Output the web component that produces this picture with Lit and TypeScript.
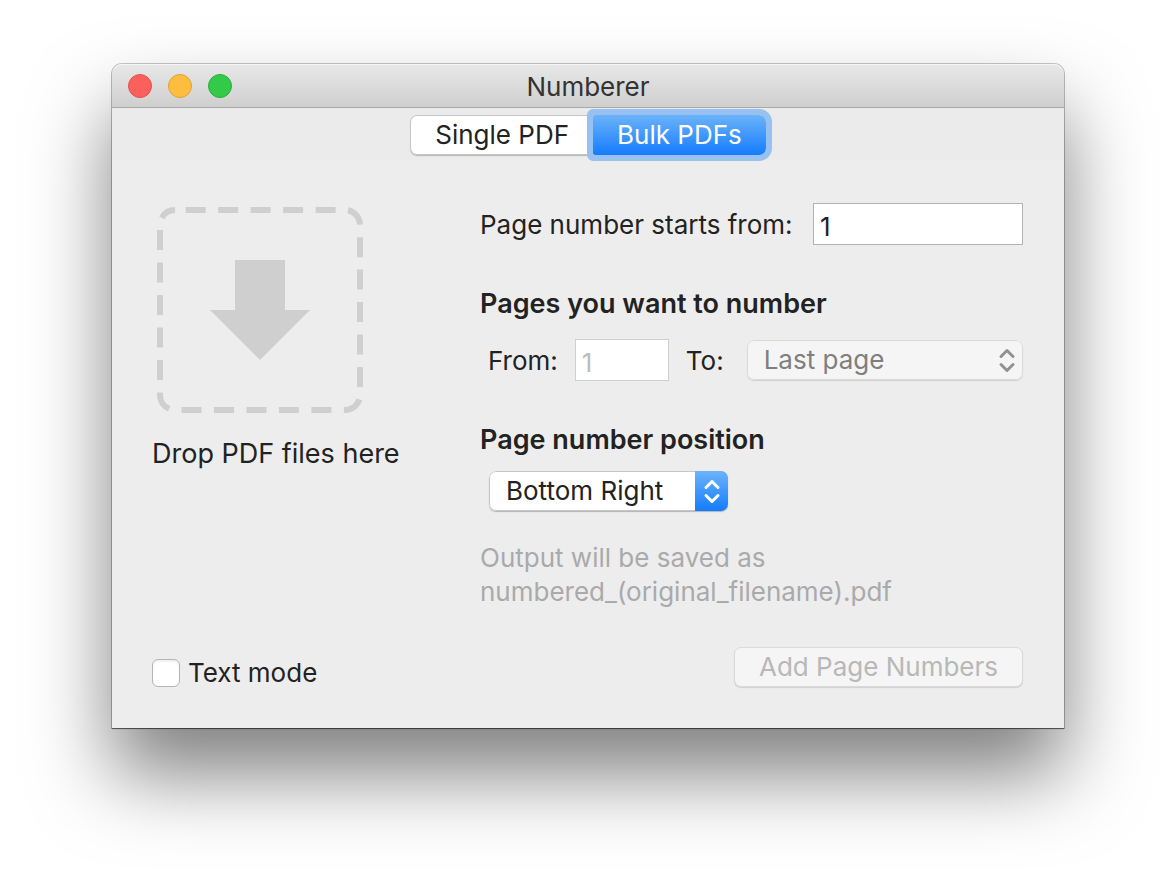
import { LitElement, html, css, svg } from "lit";
import { customElement, property, state } from "lit/decorators.js";

/** Up/down chevrons shown at the right end of a pop-up button. */
const chevrons = svg`
  <path d="M5 9.5 L11 3.5 L17 9.5" />
  <path d="M5 17.5 L11 23.5 L17 17.5" />
`;

@customElement("popup-select")
export class PopupSelect extends LitElement {
  static styles = css`
    :host {
      display: block;
    }
    .popup {
      display: grid;
      grid-template-columns: 1fr 33px;
      height: 40px;
      box-sizing: border-box;
      border-radius: 7px;
      background: #fff;
      box-shadow: 0 1px 1px #b4b4b4;
      overflow: hidden;
    }
    select {
      grid-area: 1 / 1 / 2 / 3;
      appearance: none;
      min-width: 0;
      margin: 0;
      padding: 0 36px 0 16px;
      border: 1px solid #c6c6c6;
      border-radius: 7px;
      background: transparent;
      font: inherit;
      color: #222;
      opacity: 1;
      outline-offset: -2px;
    }
    .cap {
      grid-area: 1 / 2;
      display: grid;
      place-items: center;
      pointer-events: none;
      background: linear-gradient(#6cb3fa, #147cfd);
    }
    .arrows {
      width: 22px;
      height: 27px;
      fill: none;
      stroke: #fff;
      stroke-width: 3;
      stroke-linecap: round;
      stroke-linejoin: round;
    }
    .off {
      background: #f5f5f5;
      box-shadow: 0 1px 1px #d0d0d0;
    }
    .off select {
      border-color: #dadada;
      color: #7f7f7f;
    }
    .off .cap {
      background: none;
    }
    .off .arrows {
      stroke: #929292;
    }
  `;

  @property() label = "";
  @property() value = "";
  @property({ type: Boolean }) disabled = false;
  @property({ attribute: false }) options: string[] = [];

  render() {
    return html`
      <div class="popup ${this.disabled ? "off" : ""}">
        <select aria-label=${this.label} ?disabled=${this.disabled}>
          ${this.options.map(
            (o) => html`<option ?selected=${o === this.value}>${o}</option>`
          )}
        </select>
        <span class="cap">
          <svg class="arrows" viewBox="0 0 22 27" aria-hidden="true">${chevrons}</svg>
        </span>
      </div>
    `;
  }
}

@customElement("app-root")
export class AppRoot extends LitElement {
  static styles = css`
    :host {
      display: block;
      box-sizing: border-box;
      min-height: 100vh;
      padding: 64px 112px 160px;
      background: #fff;
      overflow: hidden;
      font-family: Inter, "Liberation Sans", sans-serif;
      font-size: 26px;
      line-height: 34px;
      color: #222;
    }
    .window {
      background: #ededed;
      border-radius: 10px 10px 0 0;
      box-shadow: 0 0 0 1px rgba(0, 0, 0, 0.22), 0 1px 1px rgba(0, 0, 0, 0.5),
        0 46px 80px rgba(0, 0, 0, 0.5);
    }
    .titlebar {
      display: grid;
      grid-template-columns: 1fr auto 1fr;
      align-items: center;
      height: 44px;
      box-sizing: border-box;
      padding: 0 16px;
      border-radius: 10px 10px 0 0;
      border-bottom: 1px solid #a9a9a9;
      background: linear-gradient(#e8e8e8, #cfcfcf);
      box-shadow: inset 0 1px 0 #f5f5f5;
    }
    .lights {
      display: flex;
      gap: 16px;
    }
    .light {
      width: 24px;
      height: 24px;
      padding: 0;
      border: 1px solid #e2514c;
      border-radius: 50%;
      background: #fc605b;
    }
    .light.minimise {
      border-color: #e0a035;
      background: #fdbe40;
    }
    .light.zoom {
      border-color: #24b139;
      background: #34ca49;
    }
    .title {
      margin: 0;
      padding-top: 2px;
      font-size: 26px;
      font-weight: 400;
      color: #333;
    }
    .toolbar {
      display: flex;
      justify-content: center;
      height: 52px;
      box-sizing: border-box;
      padding-top: 7px;
      background: #ebebeb;
    }
    .segments {
      display: flex;
      height: 40px;
      border-radius: 7px;
      background: #fff;
      box-shadow: 0 1px 1px #b4b4b4;
    }
    .segment {
      padding: 0 24px;
      border: 1px solid #c6c6c6;
      background: transparent;
      font: inherit;
      color: #222;
    }
    .segment:first-child {
      border-right-width: 0;
      border-radius: 7px 2px 2px 7px;
    }
    .segment:last-child {
      border-left-width: 0;
      border-radius: 2px 7px 7px 2px;
    }
    .segment[aria-pressed="true"] {
      border-width: 0;
      background: linear-gradient(#6cb3fa, #147cfd);
      color: #fff;
      box-shadow: 0 0 0 6px #96c1f0;
    }
    .content {
      display: grid;
      grid-template-columns: 328px 1fr;
      padding: 43px 41px 41px 40px;
    }
    .side {
      display: flex;
      flex-direction: column;
      justify-content: space-between;
      align-items: flex-start;
    }
    .drop {
      display: block;
      width: 216px;
      height: 216px;
      fill: #cfcfcf;
    }
    .outline {
      fill: none;
      stroke: #cfcfcf;
      stroke-width: 6;
      stroke-dasharray: 20 12.475;
      stroke-dashoffset: -10.7;
    }
    .caption {
      margin: 18px 0 0;
      font-size: 27px;
    }
    .check {
      display: flex;
      align-items: center;
      gap: 8px;
      line-height: 28px;
    }
    .check input {
      appearance: none;
      width: 28px;
      height: 28px;
      margin: 0;
      border: 1px solid #b5b5b5;
      border-radius: 6px;
      background: #fff;
      box-shadow: inset 0 2px 2px #f0f0f0;
    }
    .check input:checked {
      background: #147cfd;
    }
    .row {
      display: flex;
      align-items: center;
      justify-content: space-between;
    }
    .name {
      padding-top: 2px;
    }
    .range {
      gap: 17px;
      justify-content: flex-start;
      margin-top: 18px;
      padding-left: 8px;
    }
    .range popup-select {
      flex: 1;
      margin-left: 6px;
    }
    .field {
      box-sizing: border-box;
      width: 210px;
      height: 42px;
      padding: 5px 6px 0;
      border: 1px solid #b2b2b2;
      border-radius: 0;
      background: #fff;
      font: inherit;
      color: #222;
    }
    .field.short {
      width: 94px;
    }
    .field:disabled {
      border-color: #d0d0d0;
      color: #bdbdbd;
    }
    .heading {
      margin: 41px 0 0;
      padding-top: 1px;
      font-size: 27px;
      line-height: 34px;
      font-weight: 600;
    }
    .position {
      display: block;
      width: 239px;
      margin: 14px 0 0 9px;
    }
    .note {
      margin: 30px 0 0;
      color: #aaa;
    }
    .actions {
      display: flex;
      justify-content: flex-end;
      margin-top: 38px;
    }
    .submit {
      min-width: 288px;
      height: 40px;
      padding: 0 24px;
      border: 1px solid #dadada;
      border-radius: 7px;
      background: #f5f5f5;
      box-shadow: 0 1px 1px #d0d0d0;
      font: inherit;
      color: #b8b8b8;
    }
  `;

  @state() private mode = "Bulk PDFs";

  render() {
    return html`
      <main class="window">
        <header class="titlebar">
          <div class="lights">
            <button class="light close" aria-label="Close"></button>
            <button class="light minimise" aria-label="Minimise"></button>
            <button class="light zoom" aria-label="Zoom"></button>
          </div>
          <h1 class="title">Numberer</h1>
        </header>
        <nav class="toolbar">
          <div class="segments">
            ${["Single PDF", "Bulk PDFs"].map(
              (name) => html`<button
                class="segment"
                aria-pressed=${this.mode === name}
                @click=${() => (this.mode = name)}
              >${name}</button>`
            )}
          </div>
        </nav>
        <div class="content">
          <section class="side">
            <div>
              <svg class="drop" viewBox="0 0 216 216" aria-hidden="true">
                <rect class="outline" x="8" y="7" width="200" height="200" rx="15" />
                <path d="M83 57 H133 V107 H158 L108 157 L58 107 H83 Z" />
              </svg>
              <p class="caption">Drop PDF files here</p>
            </div>
            <label class="check"><input type="checkbox" />Text mode</label>
          </section>
          <section>
            <div class="row">
              <label class="name" for="start">Page number starts from:</label>
              <input class="field" id="start" type="text" value="1" />
            </div>
            <h2 class="heading">Pages you want to number</h2>
            <div class="row range">
              <label class="name" for="from">From:</label>
              <input class="field short" id="from" type="text" value="1" disabled />
              <span class="name">To:</span>
              <popup-select
                label="To"
                disabled
                value="Last page"
                .options=${["Last page"]}
              ></popup-select>
            </div>
            <h2 class="heading">Page number position</h2>
            <popup-select
              class="position"
              label="Page number position"
              value="Bottom Right"
              .options=${["Bottom Left", "Bottom Center", "Bottom Right"]}
            ></popup-select>
            <p class="note">Output will be saved as<br />numbered_(original_filename).pdf</p>
            <div class="actions">
              <button class="submit" disabled>Add Page Numbers</button>
            </div>
          </section>
        </div>
      </main>
    `;
  }
}
